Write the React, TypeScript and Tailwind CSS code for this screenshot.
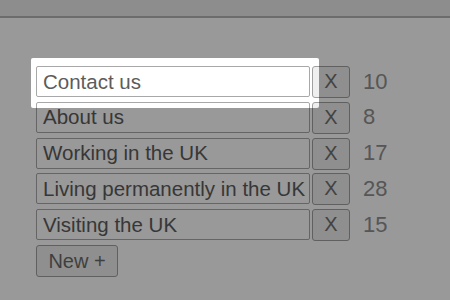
const rows = [
  { label: "Contact us", count: 10 },
  { label: "About us", count: 8 },
  { label: "Working in the UK", count: 17 },
  { label: "Living permanently in the UK", count: 28 },
  { label: "Visiting the UK", count: 15 },
];

const App = () => {
  return (
    <div
      className="relative w-[450px] h-[300px] overflow-hidden bg-white"
      style={{ fontFamily: '"Liberation Sans", Arial, sans-serif' }}
    >
      <div className="h-[18px] bg-[#ebebeb] border-b-2 border-[#b4b4b4]" />

      <div className="flex flex-col gap-[4.75px] pl-[36px] pt-[48px]">
        {rows.map((row) => (
          <div key={row.label} className="flex items-start h-[31px]">
            <input
              defaultValue={row.label}
              readOnly
              className="w-[274px] h-[31px] pl-[6px] pr-[1px] border border-[#a8a8a8] rounded-[2px] bg-white text-[20.5px] text-[#5c5c5c] outline-none"
            />
            <button className="ml-[2px] w-[38px] h-[32px] pb-[2px] border border-[#a0a0a0] rounded-[3px] bg-[#efefef] text-[20px] leading-none text-[#707070]">
              X
            </button>
            <span className="ml-[13px] h-[31px] flex items-center text-[22px] leading-none text-[#909090]">
              {row.count}
            </span>
          </div>
        ))}
        <div className="flex">
          <button className="w-[82px] h-[32px] border border-[#a0a0a0] rounded-[3px] bg-[#efefef] text-[20px] leading-none text-[#6a6a6a]">
            New +
          </button>
        </div>
      </div>

      {/* tour spotlight over the first field */}
      <div className="absolute left-[31px] top-[58px] w-[288px] h-[50px] rounded-[2px] shadow-[0_0_0_9999px_rgba(0,0,0,0.4)] pointer-events-none" />
    </div>
  );
};

export default App;
